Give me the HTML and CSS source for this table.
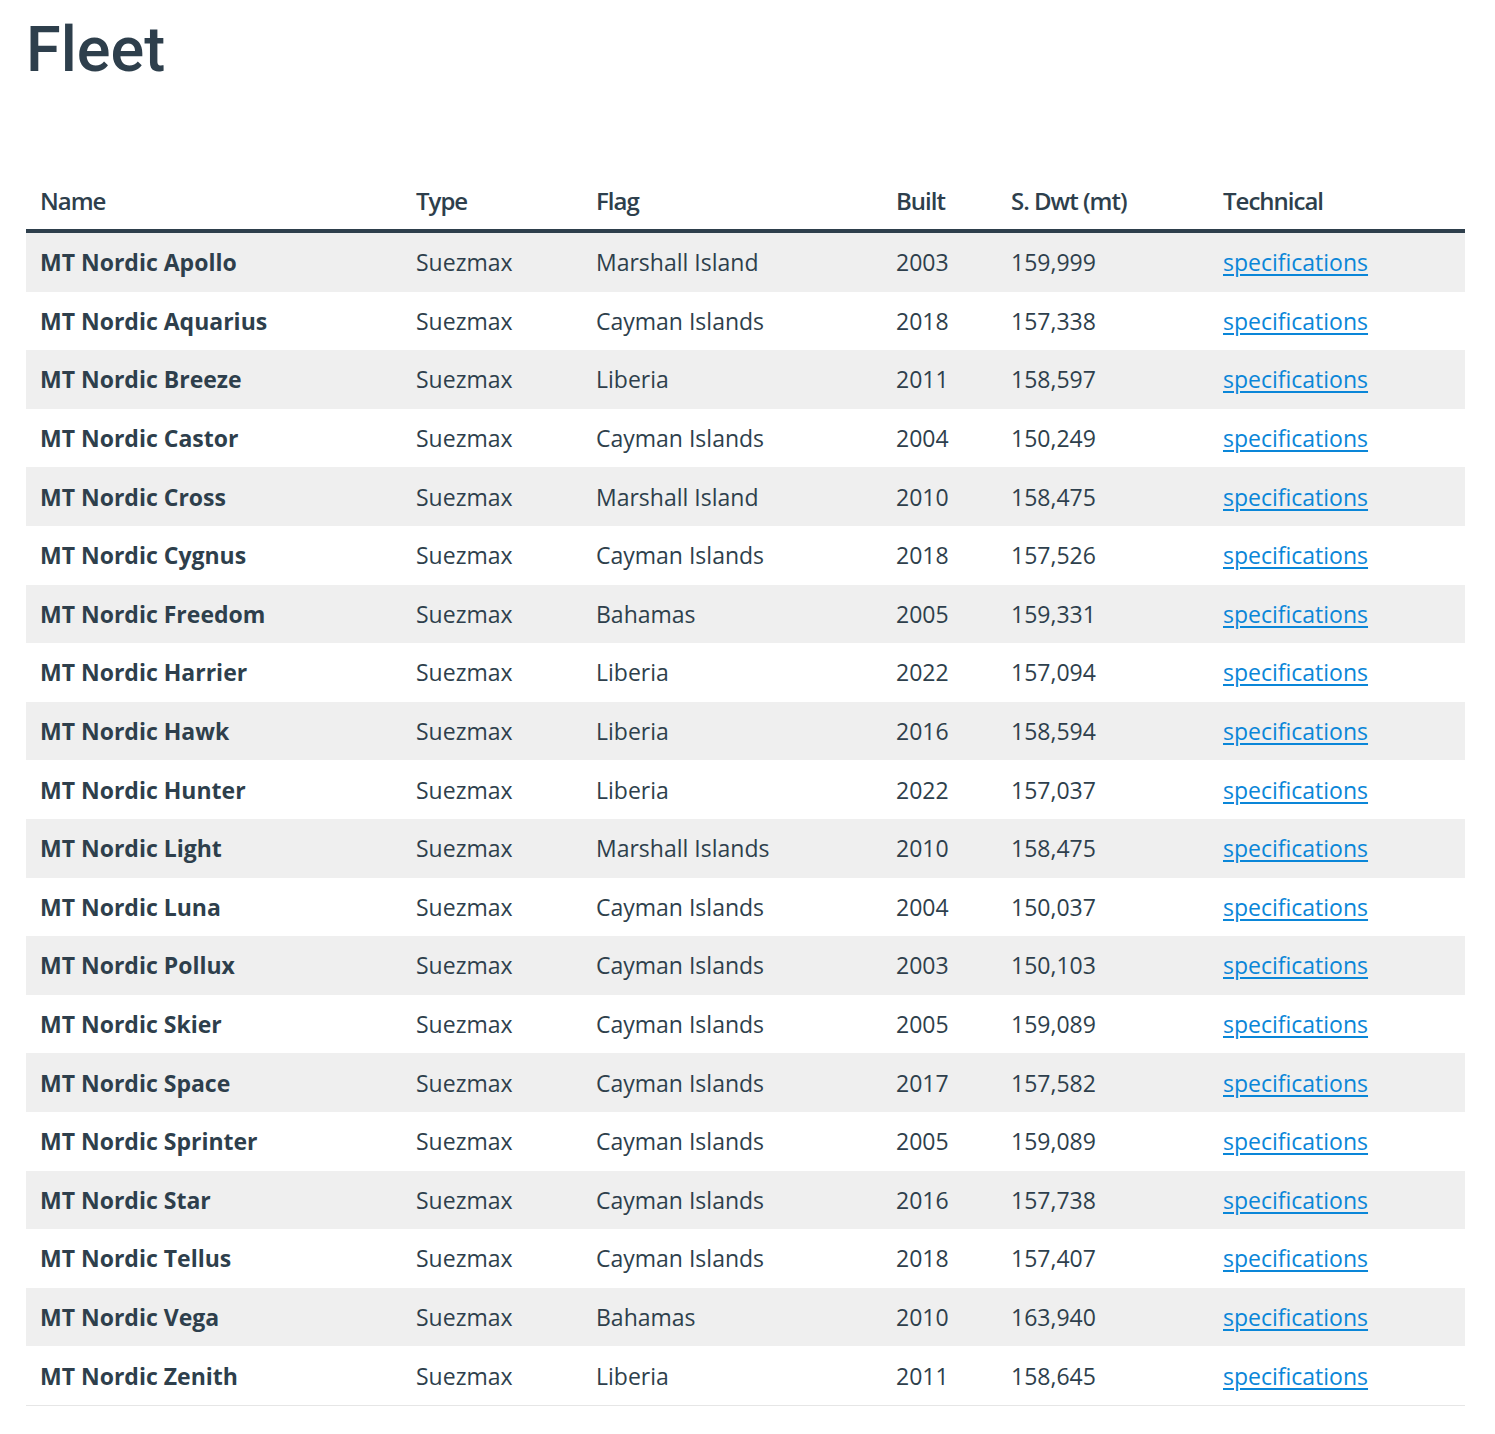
FILE: index.html
```html
<!DOCTYPE html>
<html>
<head>
<meta charset="utf-8">
<link rel="stylesheet" href="styles.css">
</head>
<body>
<main class="page">
  <h1 class="title">Fleet</h1>
  <table class="fleet">
    <colgroup>
      <col class="c-name"><col class="c-type"><col class="c-flag"><col class="c-built"><col class="c-dwt"><col class="c-tech">
    </colgroup>
    <thead>
      <tr><th>Name</th><th>Type</th><th>Flag</th><th>Built</th><th>S. Dwt (mt)</th><th>Technical</th></tr>
    </thead>
    <tbody>
      <tr><td class="name">MT Nordic Apollo</td><td>Suezmax</td><td>Marshall Island</td><td>2003</td><td>159,999</td><td><a href="#">specifications</a></td></tr>
      <tr><td class="name">MT Nordic Aquarius</td><td>Suezmax</td><td>Cayman Islands</td><td>2018</td><td>157,338</td><td><a href="#">specifications</a></td></tr>
      <tr><td class="name">MT Nordic Breeze</td><td>Suezmax</td><td>Liberia</td><td>2011</td><td>158,597</td><td><a href="#">specifications</a></td></tr>
      <tr><td class="name">MT Nordic Castor</td><td>Suezmax</td><td>Cayman Islands</td><td>2004</td><td>150,249</td><td><a href="#">specifications</a></td></tr>
      <tr><td class="name">MT Nordic Cross</td><td>Suezmax</td><td>Marshall Island</td><td>2010</td><td>158,475</td><td><a href="#">specifications</a></td></tr>
      <tr><td class="name">MT Nordic Cygnus</td><td>Suezmax</td><td>Cayman Islands</td><td>2018</td><td>157,526</td><td><a href="#">specifications</a></td></tr>
      <tr><td class="name">MT Nordic Freedom</td><td>Suezmax</td><td>Bahamas</td><td>2005</td><td>159,331</td><td><a href="#">specifications</a></td></tr>
      <tr><td class="name">MT Nordic Harrier</td><td>Suezmax</td><td>Liberia</td><td>2022</td><td>157,094</td><td><a href="#">specifications</a></td></tr>
      <tr><td class="name">MT Nordic Hawk</td><td>Suezmax</td><td>Liberia</td><td>2016</td><td>158,594</td><td><a href="#">specifications</a></td></tr>
      <tr><td class="name">MT Nordic Hunter</td><td>Suezmax</td><td>Liberia</td><td>2022</td><td>157,037</td><td><a href="#">specifications</a></td></tr>
      <tr><td class="name">MT Nordic Light</td><td>Suezmax</td><td>Marshall Islands</td><td>2010</td><td>158,475</td><td><a href="#">specifications</a></td></tr>
      <tr><td class="name">MT Nordic Luna</td><td>Suezmax</td><td>Cayman Islands</td><td>2004</td><td>150,037</td><td><a href="#">specifications</a></td></tr>
      <tr><td class="name">MT Nordic Pollux</td><td>Suezmax</td><td>Cayman Islands</td><td>2003</td><td>150,103</td><td><a href="#">specifications</a></td></tr>
      <tr><td class="name">MT Nordic Skier</td><td>Suezmax</td><td>Cayman Islands</td><td>2005</td><td>159,089</td><td><a href="#">specifications</a></td></tr>
      <tr><td class="name">MT Nordic Space</td><td>Suezmax</td><td>Cayman Islands</td><td>2017</td><td>157,582</td><td><a href="#">specifications</a></td></tr>
      <tr><td class="name">MT Nordic Sprinter</td><td>Suezmax</td><td>Cayman Islands</td><td>2005</td><td>159,089</td><td><a href="#">specifications</a></td></tr>
      <tr><td class="name">MT Nordic Star</td><td>Suezmax</td><td>Cayman Islands</td><td>2016</td><td>157,738</td><td><a href="#">specifications</a></td></tr>
      <tr><td class="name">MT Nordic Tellus</td><td>Suezmax</td><td>Cayman Islands</td><td>2018</td><td>157,407</td><td><a href="#">specifications</a></td></tr>
      <tr><td class="name">MT Nordic Vega</td><td>Suezmax</td><td>Bahamas</td><td>2010</td><td>163,940</td><td><a href="#">specifications</a></td></tr>
      <tr><td class="name">MT Nordic Zenith</td><td>Suezmax</td><td>Liberia</td><td>2011</td><td>158,645</td><td><a href="#">specifications</a></td></tr>
    </tbody>
  </table>
</main>
</body>
</html>
```
FILE: styles.css
```css
html, body {
  margin: 0;
  padding: 0;
  background: #fff;
}
body {
  font-family: "Open Sans", "Noto Sans", sans-serif;
  color: #2e3f4c;
}
.page {
  padding: 10px 30px 0 26px;
}
.title {
  font-family: Roboto, "Liberation Sans", sans-serif;
  font-weight: 500;
  font-size: 63px;
  line-height: 80px;
  margin: 0 0 81px 0;
  color: #2e3f4c;
}
.fleet {
  width: 100%;
  border-collapse: collapse;
  table-layout: fixed;
  font-size: 23px;
}
.c-name { width: 376px; }
.c-type { width: 180px; }
.c-flag { width: 300px; }
.c-built { width: 115px; }
.c-dwt { width: 212px; }
.c-tech { width: 256px; }
.fleet th {
  text-align: left;
  font-family: "Open Sans", "Noto Sans", sans-serif;
  font-weight: 600;
  font-size: 24px;
  letter-spacing: -1px;
  padding: 0 14px;
  height: 58px;
  vertical-align: middle;
  border-bottom: 4px solid #2e3f4c;
}
.fleet td {
  padding: 0 14px;
  height: 58.6px;
  vertical-align: middle;
  white-space: nowrap;
}
.fleet tbody tr:nth-child(odd) {
  background: #efefef;
}
.fleet tbody tr:last-child {
  border-bottom: 1px solid #e6e6e6;
}
.fleet td.name {
  font-weight: 700;
}
.fleet a {
  color: #0a86d8;
  text-decoration: underline;
  text-underline-offset: 3px;
}
```
